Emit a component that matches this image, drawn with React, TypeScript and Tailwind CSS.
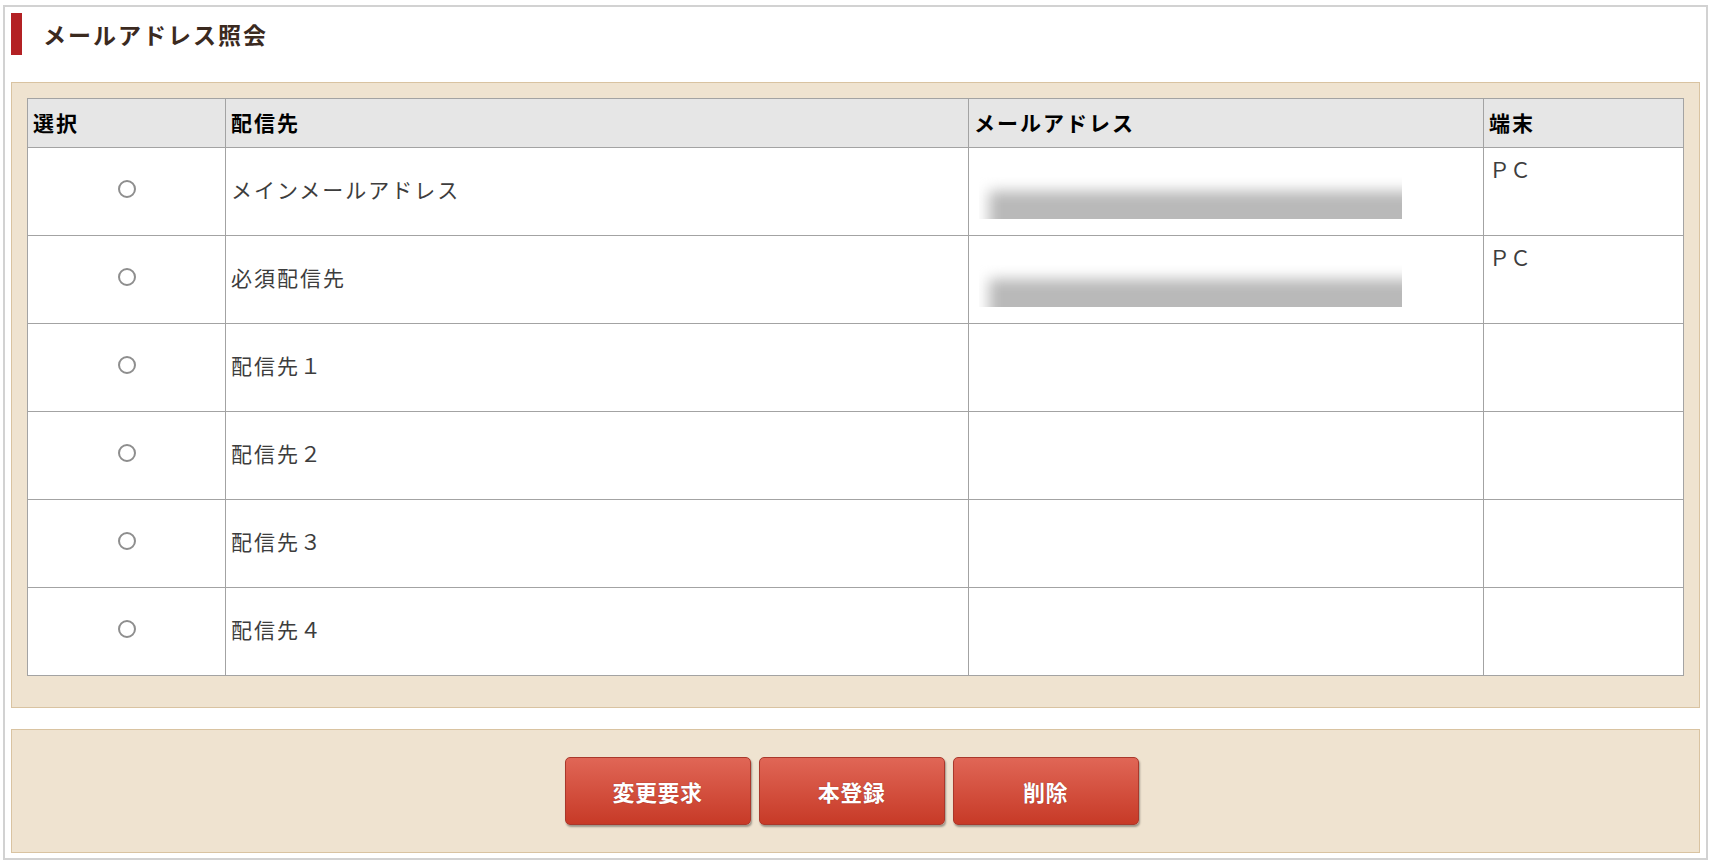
import React from "react";

const rows = [
  { name: "メインメールアドレス", email: true, term: "ＰＣ" },
  { name: "必須配信先", email: true, term: "ＰＣ" },
  { name: "配信先１", email: false, term: "" },
  { name: "配信先２", email: false, term: "" },
  { name: "配信先３", email: false, term: "" },
  { name: "配信先４", email: false, term: "" },
];

function Blur() {
  return (
    <div className="relative w-[423px] h-[42px] overflow-hidden bg-white">
      <div className="absolute left-[10px] top-[14px] right-[-20px] bottom-[-20px] bg-[#b9b9b9] blur-[7px]" />
    </div>
  );
}

function Btn({ label }: { label: string }) {
  return (
    <button className="w-[186px] h-[68px] rounded-[5px] border border-[#a9382b] bg-[linear-gradient(#e06656,#c73a27)] shadow-[1px_2px_2px_rgba(0,0,0,0.35)] text-white text-[22px] font-bold tracking-[0.5px] [text-shadow:0_0_1px_rgba(80,0,0,0.6)]">
      {label}
    </button>
  );
}

export default function App() {
  return (
    <div
      className="w-[1712px] h-[862px] bg-white pt-[5px] pl-[3px]"
      style={{ fontFamily: '"Noto Sans CJK JP", "Noto Sans", sans-serif' }}
    >
      <div className="w-[1705px] h-[855px] border-2 border-[#d2d2d2] px-[6px] pt-[6px]">
        <div className="flex items-center h-[42px]">
          <div className="w-[11px] h-[42px] bg-[#b32124]" />
          <div className="ml-[21px] text-[23px] font-bold tracking-[2px] text-[#3b2a1f]">
            メールアドレス照会
          </div>
        </div>

        <div className="mt-[27px] border border-[#d9c3a1] bg-[#efe3d0] px-[15px] pt-[15px] pb-[31px]">
          <table className="border-collapse w-[1656px] table-fixed bg-white">
            <colgroup>
              <col className="w-[198px]" />
              <col className="w-[743px]" />
              <col className="w-[515px]" />
              <col className="w-[200px]" />
            </colgroup>
            <thead>
              <tr className="h-[49px] bg-[#e6e6e6]">
                {["選択", "配信先", "メールアドレス", "端末"].map((h) => (
                  <th
                    key={h}
                    className="border border-[#a3a3a3] px-[5px] text-left align-middle text-[21px] font-bold text-black tracking-[2px]"
                  >
                    {h}
                  </th>
                ))}
              </tr>
            </thead>
            <tbody>
              {rows.map((r, i) => (
                <tr key={i} className="h-[88px]">
                  <td className="border border-[#a3a3a3] align-middle">
                    <div className="flex justify-center pl-[1px] pb-[6px]">
                      <span className="w-[18px] h-[18px] rounded-full border-2 border-[#8e8e8e] bg-white" />
                    </div>
                  </td>
                  <td className="border border-[#a3a3a3] px-[5px] pb-[4px] align-middle text-[21px] text-[#3d3d3d] tracking-[2px]">
                    {r.name}
                  </td>
                  <td className="border border-[#a3a3a3] px-[10px] align-middle">
                    {r.email ? (
                      <div className="pt-[12px]">
                        <Blur />
                      </div>
                    ) : null}
                  </td>
                  <td className="border border-[#a3a3a3] pl-[5px] pt-[6px] align-top text-[21px] text-[#3d3d3d]">
                    {r.term}
                  </td>
                </tr>
              ))}
            </tbody>
          </table>
        </div>

        <div className="mt-[21px] h-[124px] border border-[#d9c3a1] bg-[#efe3d0] flex items-center justify-center gap-[8px] pr-[8px]">
          <Btn label="変更要求" />
          <Btn label="本登録" />
          <Btn label="削除" />
        </div>
      </div>
    </div>
  );
}
